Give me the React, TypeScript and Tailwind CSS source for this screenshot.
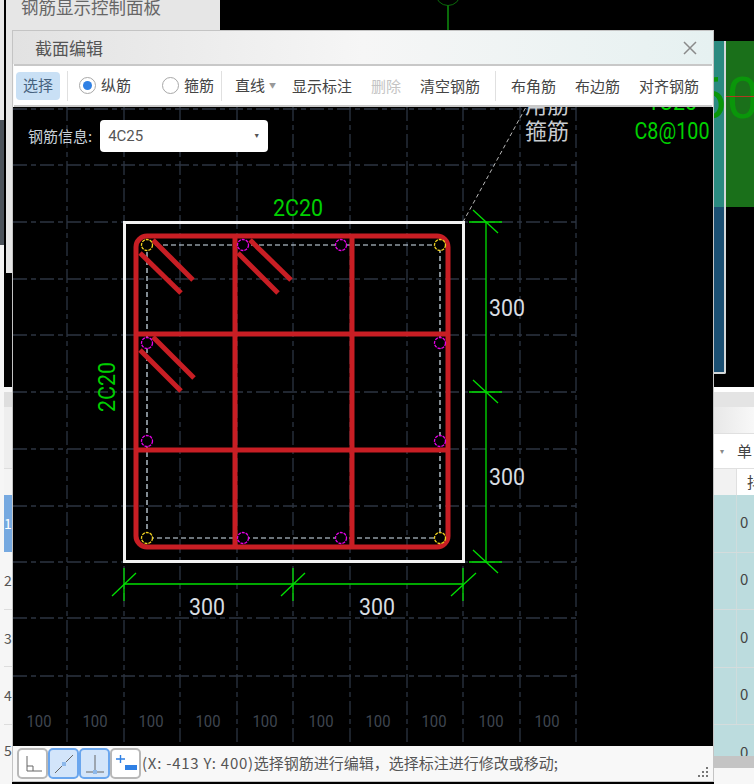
const cjk = "font-['Noto_Sans_CJK_SC','Noto_Sans',sans-serif]"
const cad = "Roboto, sans-serif"

const gridX = [67, 124, 180, 237, 293, 350, 407, 463, 520, 576]
const gridY = [109, 165, 222, 279, 335, 392, 449, 506, 562, 618, 676]
const labelX = [39, 95, 151, 208, 265, 321, 378, 434, 491, 547]
const bars = [
  [243, 245], [341, 245], [147, 343], [440, 343], [147, 441], [440, 441], [243, 538], [341, 538],
]
const corners = [[147, 245], [440, 245], [147, 538], [440, 538]]
const hooks = [
  [153, 240, 193, 280], [140, 253, 181, 293],
  [250, 240, 291, 280], [238, 253, 278, 293],
  [153, 337, 194, 378], [140, 350, 181, 391],
]
const greenLines = [
  // right dimension
  [486, 222, 486, 562], [469, 222, 502, 222], [473, 210, 498, 233],
  [469, 392, 502, 392], [473, 380, 498, 403],
  [469, 562, 502, 562], [473, 550, 498, 573],
  // bottom dimension
  [124, 584, 463, 584], [124, 568, 124, 601], [112, 596, 136, 573],
  [293, 568, 293, 601], [281, 596, 305, 573],
  [463, 568, 463, 601], [451, 596, 476, 573],
]

function CadText({ x, y, size, width, fill, children }: { x: number; y: number; size: number; width: number; fill: string; children: string }) {
  return (
    <text x={x} y={y} textAnchor="middle" fontSize={size} fill={fill} fontFamily={cad} textLength={width} lengthAdjust="spacingAndGlyphs">
      {children}
    </text>
  )
}

function Drawing() {
  return (
    <svg viewBox="13 107 699 638" className="block w-[699px] h-[638px]">
      {gridX.map(x => (
        <line key={x} x1={x} y1={107} x2={x} y2={745} stroke="#2c3542" strokeWidth="1.3" strokeDasharray="14 4 5 4" />
      ))}
      {gridY.map(y => (
        <line key={y} x1={13} y1={y} x2={576} y2={y} stroke="#2c3542" strokeWidth="1.3" strokeDasharray="14 4 5 4" />
      ))}
      {labelX.map(x => (
        <CadText key={x} x={x} y={727} size={16} width={25} fill="#3f4650">100</CadText>
      ))}

      <line x1="463" y1="222" x2="526" y2="107" stroke="#b9b9b9" strokeWidth="1" strokeDasharray="4 3" />
      <text x="547" y="113" textAnchor="middle" fontSize="22" fill="#c8ccd0" fontFamily="Noto Sans CJK SC, sans-serif">用筋</text>
      <text x="547" y="139" textAnchor="middle" fontSize="22" fill="#c8ccd0" fontFamily="Noto Sans CJK SC, sans-serif">箍筋</text>
      <CadText x={672} y={110} size={23} width={50} fill="#00d000">1C20</CadText>
      <CadText x={672} y={139} size={23} width={75} fill="#00d000">C8@100</CadText>

      <rect x="124.5" y="222.5" width="339" height="339" fill="none" stroke="#f2f2f2" strokeWidth="3" />
      <rect x="147" y="245" width="293" height="293" fill="none" stroke="#d8e8f4" strokeWidth="1.2" strokeDasharray="5 3" />

      <g stroke="#c81e24" fill="none" strokeWidth="5">
        <rect x="136" y="236" width="312" height="311" rx="11" />
        <line x1="235" y1="236" x2="235" y2="547" />
        <line x1="352" y1="236" x2="352" y2="547" />
        <line x1="136" y1="334" x2="448" y2="334" />
        <line x1="136" y1="450" x2="448" y2="450" />
        {hooks.map(h => (
          <line key={h.join()} x1={h[0]} y1={h[1]} x2={h[2]} y2={h[3]} />
        ))}
      </g>

      {bars.map(b => (
        <circle key={b.join()} cx={b[0]} cy={b[1]} r="5.5" fill="#000" stroke="#e600e6" strokeWidth="1.3" strokeDasharray="3 1" />
      ))}
      {corners.map(b => (
        <circle key={b.join()} cx={b[0]} cy={b[1]} r="5.5" fill="#000" stroke="#f0d020" strokeWidth="1.3" strokeDasharray="3 1" />
      ))}

      <g stroke="#00e000" strokeWidth="1.3">
        {greenLines.map(l => (
          <line key={l.join()} x1={l[0]} y1={l[1]} x2={l[2]} y2={l[3]} />
        ))}
      </g>

      <CadText x={298} y={216} size={23} width={50} fill="#00d000">2C20</CadText>
      <g transform="translate(115 387) rotate(-90)">
        <CadText x={0} y={0} size={23} width={50} fill="#00d000">2C20</CadText>
      </g>
      <CadText x={207} y={615} size={24} width={36} fill="#d8dde2">300</CadText>
      <CadText x={377} y={615} size={24} width={36} fill="#d8dde2">300</CadText>
      <CadText x={507} y={316} size={24} width={36} fill="#d8dde2">300</CadText>
      <CadText x={507} y={485} size={24} width={36} fill="#d8dde2">300</CadText>
    </svg>
  )
}

function Radio({ checked, label, className }: { checked?: boolean; label: string; className: string }) {
  return (
    <div className={`flex items-center gap-[5px] ${className}`}>
      <span className="flex w-[17px] h-[17px] items-center justify-center rounded-full border border-[#a8a8a8] bg-white">
        {checked && <span className="w-[9px] h-[9px] rounded-full bg-[#2f80e4]" />}
      </span>
      <span>{label}</span>
    </div>
  )
}

function StatusButton({ active, children }: { active?: boolean; children: React.ReactNode }) {
  return (
    <div className={`w-[31px] h-[31px] rounded-[5px] border-2 flex items-center justify-center ${active ? 'bg-[#d3e5fa] border-[#6aa6ee]' : 'bg-white border-[#b8b8b8]'}`}>
      <svg viewBox="0 0 24 24" className="w-[24px] h-[24px]" fill="none" stroke="#666" strokeWidth="1">
        {children}
      </svg>
    </div>
  )
}

export default function App() {
  return (
    <div className={`relative w-[754px] h-[784px] overflow-hidden bg-black ${cjk}`}>
      {/* background: control panel */}
      <div className="absolute left-0 top-0 w-[4px] h-[120px] bg-[#e8e8e8]" />
      <div className="absolute left-0 top-[120px] w-[4px] h-[125px] bg-[#4c535b]" />
      <div className="absolute left-0 top-[245px] w-[4px] h-[142px] bg-[#f4f4f4]" />
      <div className="absolute left-[6px] top-0 w-[214px] h-[273px] bg-[#e6e6e6]">
        <p className="text-[17.5px] text-[#666] ml-[15px] -mt-[6px] whitespace-nowrap">钢筋显示控制面板</p>
      </div>
      <div className="absolute left-[447px] top-[5px] w-[1.5px] h-[28px] bg-[#0a6a0a]" />
      <div className="absolute left-[435px] -top-[20px] w-[26px] h-[26px] rounded-full border border-[#0a6a0a]" />

      {/* background: right side panel */}
      <div className="absolute left-[714px] top-[41px] w-[12px] h-[333px] flex flex-col border-r-2 border-b-2 border-[#d4d8d8] rounded-br-[2px]">
        <div className="h-[166px] bg-[#2b8a80]" />
        <div className="flex-1 bg-[#1b4f72]" />
      </div>
      <div className="absolute left-[726px] top-[41px] w-[28px] h-[166px] bg-[#1a701a]" />
      <span className="absolute left-[694px] top-[69px] text-[58px] leading-none text-[#0a960a] font-['Roboto']">60</span>
      <div className="absolute left-[726px] top-[96px] w-[28px] h-[1px] bg-[#b03a20]" />

      {/* background: table on the left */}
      <div className="absolute left-0 top-[387px] w-[12px] h-[397px] pl-[4px] flex flex-col bg-[#f6f6f6] text-[14px] text-[#555]">
        <div className="h-[5px]" />
        <div className="h-[15px] bg-[#dedede]" />
        <div className="h-[61px] bg-[#eeeeee]" />
        <div className="h-[27px] bg-[#f4f4f4] border-t border-[#ddd]" />
        <div className="h-[57px] bg-[#76a9e0] text-white flex items-center justify-center">1</div>
        <div className="h-[58px] border-b border-[#ddd] flex items-center justify-center">2</div>
        <div className="h-[57px] border-b border-[#ddd] flex items-center justify-center">3</div>
        <div className="h-[58px] border-b border-[#ddd] flex items-center justify-center">4</div>
        <div className="h-[50px] flex items-center justify-center">5</div>
      </div>

      {/* background: table on the right */}
      <div className="absolute left-[714px] top-[387px] w-[40px] h-[397px] flex flex-col bg-[#f7f7f7] text-[15px] text-[#444]">
        <div className="h-[5px] shrink-0 bg-white" />
        <div className="h-[15px] shrink-0 bg-[#e4e4e4]" />
        <div className="h-[26px] shrink-0 bg-gradient-to-r from-[#e8e8e8] to-[#f8f8f8]" />
        <div className="h-[35px] shrink-0 bg-white border-t border-[#e0e0e0] flex items-center">
          <span className="ml-[6px] shrink-0 text-[8px] text-[#888]">▾</span>
          <span className="ml-[13px] shrink-0">单</span>
        </div>
        <div className="h-[27px] shrink-0 bg-white border-t border-[#e0e0e0] flex items-center">
          <div className="w-[23px] h-full shrink-0 bg-[#f2f2f2] border-r border-[#e0e0e0]" />
          <span className="ml-[10px] shrink-0">抖</span>
        </div>
        {[0, 1, 2, 3].map(i => (
          <div key={i} className="h-[57.5px] shrink-0 bg-[#bcdcde] border-b border-[#d4dcdc] flex items-center">
            <div className="w-[23px] h-full shrink-0 border-r border-[#cfdcdc]" />
            <span className="ml-[3px] -mt-[3px]">0</span>
          </div>
        ))}
        <div className="h-[31px] shrink-0 bg-[#bcdcde] overflow-hidden">
          <span className="block ml-[26px] mt-[16px]">0</span>
        </div>
        <div className="h-[12px] shrink-0 bg-[#c4c4c4]" />
      </div>

      {/* dialog */}
      <div className="absolute left-[12px] top-[30px] w-[702px] h-[752px] flex flex-col bg-[#f8f8f8] border border-[#c4c4c4]">
        <div className="h-[33px] shrink-0 flex items-center justify-between bg-gradient-to-r from-[#e2e2e2] via-[#f6f6f6] to-[#e6f1f1] pl-[22px] pr-[16px]">
          <span className="text-[17px] text-[#555]">截面编辑</span>
          <svg viewBox="0 0 14 14" className="w-[14px] h-[14px]" fill="none" stroke="#8a8a8a" strokeWidth="1.5">
            <path d="M1 1 L13 13 M13 1 L1 13" />
          </svg>
        </div>

        <div className="h-[43px] shrink-0 mx-[1px] flex items-center bg-white border-y-2 border-[#c8c8c8] text-[15px] text-[#444] whitespace-nowrap">
          <div className="ml-[2px] w-[44px] h-[28px] rounded-[4px] bg-[#c9e0f5] text-[#46627e] flex items-center justify-center">选择</div>
          <div className="ml-[7px] w-[1px] h-[30px] bg-[#e0e0e0]" />
          <Radio checked label="纵筋" className="ml-[11px]" />
          <Radio label="箍筋" className="ml-[31px]" />
          <div className="ml-[7px] w-[1px] h-[30px] bg-[#e0e0e0]" />
          <div className="ml-[10px] w-[48px] h-[28px] pl-[3px] flex items-center gap-[4px]">
            直线<span className="text-[7px] text-[#999]">▼</span>
          </div>
          <span className="ml-[12px] mt-[2px]">显示标注</span>
          <span className="ml-[19px] mt-[2px] text-[#c4c4c4]">删除</span>
          <span className="ml-[19px] mt-[2px]">清空钢筋</span>
          <div className="ml-[15px] w-[1px] h-[30px] bg-[#e0e0e0]" />
          <span className="ml-[15px] mt-[2px]">布角筋</span>
          <span className="ml-[19px] mt-[2px]">布边筋</span>
          <span className="ml-[19px] mt-[2px]">对齐钢筋</span>
        </div>

        <div className="relative flex-1 bg-black overflow-hidden">
          <Drawing />
          <div className="absolute left-[15px] top-[13px] flex items-center text-[15px] text-[#c9d2da]">
            <span>钢筋信息:</span>
            <div className="ml-[8px] w-[168px] h-[32px] rounded-[4px] bg-white flex items-center justify-between px-[8px] text-[#555] font-['Roboto']">
              4C25<span className="text-[7px] text-[#555]">▼</span>
            </div>
          </div>
        </div>

        <div className="relative h-[35px] shrink-0 flex items-center pl-[4px] bg-[#f8f8f8] text-[15px] text-[#555]">
          <StatusButton>
            <path d="M6 4 V19 H21 M6 14 H12 V19" />
          </StatusButton>
          <StatusButton active>
            <path d="M3 21 L21 3" />
            <rect x="10" y="10" width="4" height="4" fill="#8db8ea" stroke="none" />
          </StatusButton>
          <StatusButton active>
            <path d="M12 3 V20 M3 20 H21" />
            <rect x="10" y="18" width="4" height="4" fill="#8db8ea" stroke="none" />
          </StatusButton>
          <StatusButton>
            <path d="M2 7 H11 M6.5 3 V11" stroke="#2f80e4" strokeWidth="1.4" />
            <rect x="11" y="13" width="12" height="5" fill="#2f80e4" stroke="none" />
          </StatusButton>
          <span className="ml-[1px] whitespace-nowrap">
            <span className="tracking-[0.75px]">(X: -413 Y: 400)</span>选择钢筋进行编辑，选择标注进行修改或移动;
          </span>
          <svg viewBox="0 0 12 12" className="absolute right-[4px] bottom-[3px] w-[12px] h-[12px]" fill="#777">
            <rect x="9" y="1" width="2" height="2" />
            <rect x="5" y="5" width="2" height="2" />
            <rect x="9" y="5" width="2" height="2" />
            <rect x="1" y="9" width="2" height="2" />
            <rect x="5" y="9" width="2" height="2" />
            <rect x="9" y="9" width="2" height="2" />
          </svg>
        </div>
      </div>
    </div>
  )
}
